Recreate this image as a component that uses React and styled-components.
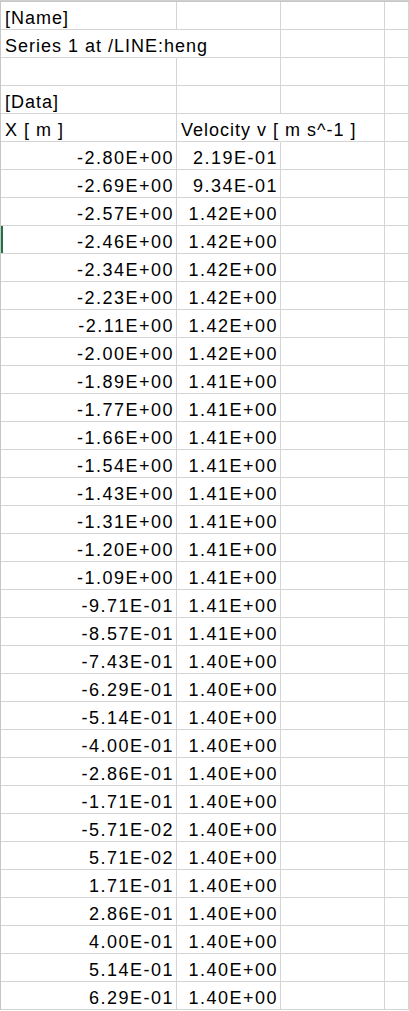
import styled, { createGlobalStyle } from "styled-components";

const GlobalStyle = createGlobalStyle`
  html, body {
    margin: 0;
    padding: 0;
    background: #ffffff;
  }
`;

const Sheet = styled.div`
  width: 409px;
  height: 1011px;
  overflow: hidden;
  background: #fff;
  font-family: "Liberation Sans", Arial, sans-serif;
  font-size: 18px;
  color: #000;
`;

const HeaderEdge = styled.div`
  height: 2px;
  background: #d0d0d0;
  border-bottom: 1px solid #c6c6c6;
  box-sizing: border-box;
`;

const Grid = styled.div`
  display: grid;
  grid-template-columns: 176px 104px 104px 1fr;
  grid-auto-rows: 28px;
  border-left: 1px solid #c6c6c6;
`;

const Cell = styled.div`
  box-sizing: border-box;
  display: flex;
  align-items: flex-end;
  justify-content: ${(p) => (p.$num ? "flex-end" : "flex-start")};
  padding: 0 ${(p) => (p.$num ? "2px" : "0")} 0 ${(p) => (p.$num ? "0" : "4px")};
  border-right: 1px solid ${(p) => (p.$spill ? "transparent" : "#d4d4d4")};
  border-bottom: 1px solid #d4d4d4;
  white-space: nowrap;
  letter-spacing: ${(p) => (p.$num ? "1.5px" : "1px")};
  line-height: 21px;
  box-shadow: ${(p) => (p.$active ? "inset 2px 0 0 #217346" : "none")};
  position: relative;
  z-index: ${(p) => (p.$spill ? 1 : 0)};
`;

const xs = [
  "-2.80E+00", "-2.69E+00", "-2.57E+00", "-2.46E+00", "-2.34E+00", "-2.23E+00",
  "-2.11E+00", "-2.00E+00", "-1.89E+00", "-1.77E+00", "-1.66E+00", "-1.54E+00",
  "-1.43E+00", "-1.31E+00", "-1.20E+00", "-1.09E+00", "-9.71E-01", "-8.57E-01",
  "-7.43E-01", "-6.29E-01", "-5.14E-01", "-4.00E-01", "-2.86E-01", "-1.71E-01",
  "-5.71E-02", "5.71E-02", "1.71E-01", "2.86E-01", "4.00E-01", "5.14E-01", "6.29E-01",
];

const vs = [
  "2.19E-01", "9.34E-01", "1.42E+00", "1.42E+00", "1.42E+00", "1.42E+00",
  "1.42E+00", "1.42E+00", "1.41E+00", "1.41E+00", "1.41E+00", "1.41E+00",
  "1.41E+00", "1.41E+00", "1.41E+00", "1.41E+00", "1.41E+00", "1.41E+00",
  "1.40E+00", "1.40E+00", "1.40E+00", "1.40E+00", "1.40E+00", "1.40E+00",
  "1.40E+00", "1.40E+00", "1.40E+00", "1.40E+00", "1.40E+00", "1.40E+00", "1.40E+00",
];

function TextRow({ a, b, spill }) {
  return (
    <>
      <Cell $spill={spill}>{a}</Cell>
      <Cell $spill={b && b.length > 10}>{b}</Cell>
      <Cell />
      <Cell />
    </>
  );
}

function NumRow({ x, v, active }) {
  return (
    <>
      <Cell $num $active={active}>{x}</Cell>
      <Cell $num>{v}</Cell>
      <Cell />
      <Cell />
    </>
  );
}

export default function App() {
  return (
    <Sheet>
      <GlobalStyle />
      <HeaderEdge />
      <Grid>
        <TextRow a="[Name]" />
        <TextRow a="Series 1 at /LINE:heng" spill />
        <TextRow />
        <TextRow a="[Data]" />
        <TextRow a="X [ m ]" b="Velocity v [ m s^-1 ]" />
        {xs.map((x, i) => (
          <NumRow key={i} x={x} v={vs[i]} active={i === 3} />
        ))}
      </Grid>
    </Sheet>
  );
}
